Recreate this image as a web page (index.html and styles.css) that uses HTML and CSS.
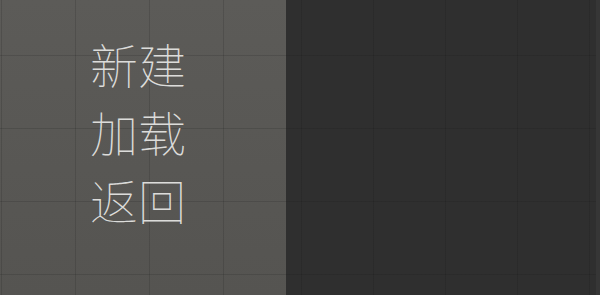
FILE: index.html
```html
<!DOCTYPE html>
<html>
  <head>
    <meta charset='utf-8'>
    <meta name="viewport" content="width=device-width,initial-scale=1.0">
    <title>
      菜单
    </title>
    <link rel="stylesheet" href="styles.css">
  </head>
  <body>
    <section class='screen'>
      <nav class='menu'>
        <ul>
          <li>新建</li>
          <li>加载</li>
          <li>返回</li>
        </ul>
      </nav>
      <div class='preview'></div>
    </section>
  </body>
</html>
```

FILE: styles.css
```css
html, body, ul, li, section {
    margin: 0;
    padding: 0;
}
body {
    background-color: #2f2f2f;
    font-family: "Noto Sans CJK SC", "Noto Sans", sans-serif;
    width: 600px;
    height: 295px;
    overflow: hidden;
}
.screen {
    display: flex;
    height: 295px;
}
.menu {
    width: 286px;
    flex: none;
    background-color: #595855;
    background-image:
        linear-gradient(to right, rgba(40, 40, 38, .22) 1px, transparent 1px),
        linear-gradient(to bottom, rgba(40, 40, 38, .22) 1px, transparent 1px),
        linear-gradient(to bottom, #5c5b58, #555451);
    background-size: 74px 73px, 74px 73px, 100% 100%;
    background-position: 1px 55px, 1px 55px, 0 0;
}
.menu ul {
    list-style: none;
    padding: 29px 0 0 90px;
}
.menu li {
    font-size: 48px;
    font-weight: 100;
    line-height: 68px;
    color: #dcdcda;
}
.preview {
    flex: 1;
    background-color: #2f2f2f;
    background-image:
        linear-gradient(to right, rgba(20, 20, 20, .14) 1px, transparent 1px),
        linear-gradient(to bottom, rgba(20, 20, 20, .14) 1px, transparent 1px);
    background-size: 72px 73px;
    background-position: 15px 55px;
    border-right: 4px solid #363636;
}
```
